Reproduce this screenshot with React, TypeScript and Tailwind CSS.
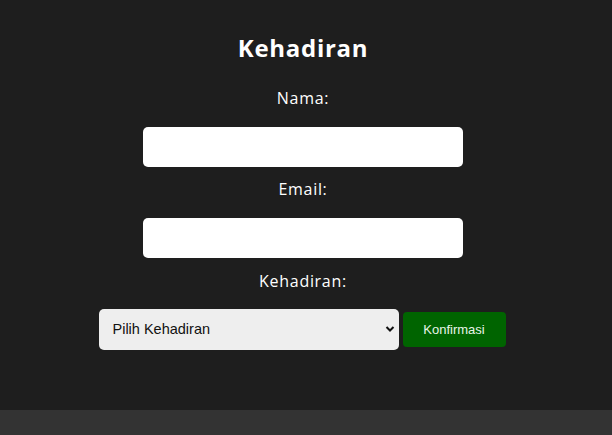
import React from "react";

export default function App() {
  const poppins = { fontFamily: '"Open Sans", "Noto Sans", sans-serif' } as React.CSSProperties;
  return (
    <div className="min-h-[435px] w-[612px] bg-[#1e1e1e] flex flex-col" style={poppins}>
      <div className="h-[410px] flex flex-col items-center pr-[6px]">
        <h1 className="mt-[30px] text-[24px] leading-[36px] font-bold tracking-[0.7px] text-white">Kehadiran</h1>
        <label className="mt-[20px] text-[16px] leading-[24px] tracking-[0.7px] text-white">Nama:</label>
        <input type="text" className="mt-[17px] w-[320px] h-[40px] rounded-[5px] bg-white outline-none" />
        <label className="mt-[10px] text-[16px] leading-[24px] tracking-[0.7px] text-white">Email:</label>
        <input type="email" className="mt-[17px] w-[320px] h-[40px] rounded-[5px] bg-white outline-none" />
        <label className="mt-[11px] text-[16px] leading-[24px] tracking-[0.7px] text-white">Kehadiran:</label>
        <div className="mt-[16px] mr-[2px] flex items-center gap-[4px]">
          <div className="relative w-[300px] h-[41px]">
            <select
              className="appearance-none w-full h-full rounded-[5px] bg-[#eeeeee] pl-[14px] text-[14.5px] text-[#111] outline-none"
              style={{ fontFamily: '"Liberation Sans", Arial, sans-serif' }}
              defaultValue=""
            >
              <option value="">Pilih Kehadiran</option>
              <option value="hadir">Hadir</option>
              <option value="tidak">Tidak Hadir</option>
            </select>
            <svg className="absolute right-[4px] top-[16px] pointer-events-none" width="10" height="8" viewBox="0 0 10 8">
              <path d="M1.5 2 L5 5.5 L8.5 2" stroke="#111" strokeWidth="2" fill="none" />
            </svg>
          </div>
          <button
            className="w-[103px] h-[35px] rounded-[4px] bg-[#006400] text-[13px] text-[#e8f4e8]"
            style={{ fontFamily: '"Liberation Sans", Arial, sans-serif' }}
          >
            Konfirmasi
          </button>
        </div>
      </div>
      <div className="h-[25px] bg-[#333333]" />
    </div>
  );
}
